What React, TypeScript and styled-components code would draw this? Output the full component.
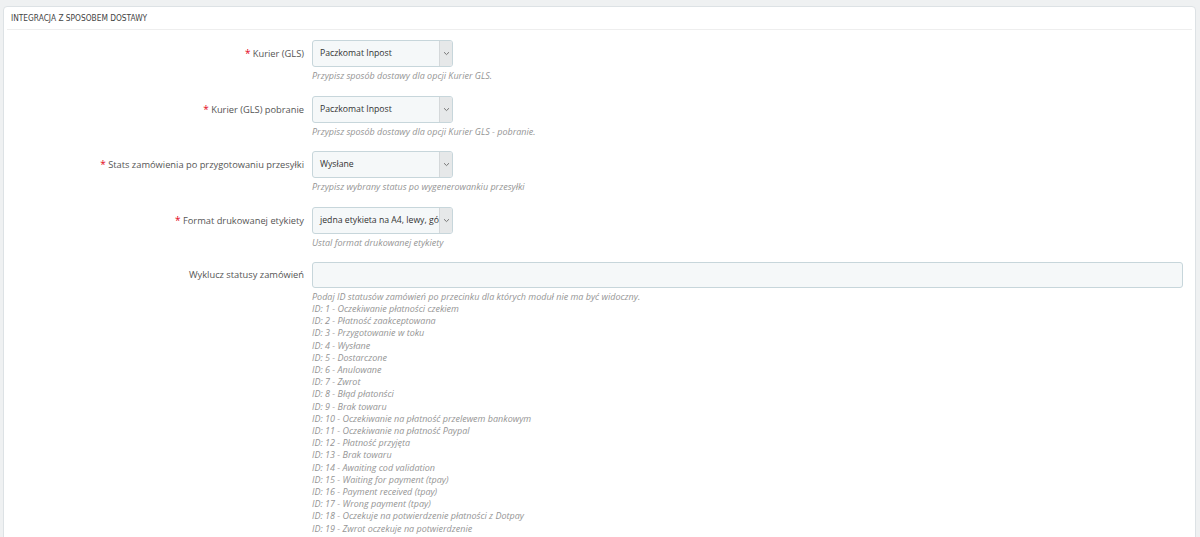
import React from "react";
import styled, { createGlobalStyle } from "styled-components";

const GlobalStyle = createGlobalStyle`
  html, body {
    margin: 0;
    padding: 0;
    background: #eff1f2;
    font-family: "Open Sans", "Liberation Sans", sans-serif;
    color: #555;
  }
`;

interface SelectField {
  label: string;
  value: string;
  help: string;
}

const selectFields: SelectField[] = [
  {
    label: "Kurier (GLS)",
    value: "Paczkomat Inpost",
    help: "Przypisz sposób dostawy dla opcji Kurier GLS.",
  },
  {
    label: "Kurier (GLS) pobranie",
    value: "Paczkomat Inpost",
    help: "Przypisz sposób dostawy dla opcji Kurier GLS - pobranie.",
  },
  {
    label: "Stats zamówienia po przygotowaniu przesyłki",
    value: "Wysłane",
    help: "Przypisz wybrany status po wygenerowankiu przesyłki",
  },
  {
    label: "Format drukowanej etykiety",
    value: "jedna etykieta na A4, lewy, górny róg",
    help: "Ustal format drukowanej etykiety",
  },
];

const statuses = [
  "Oczekiwanie płatności czekiem",
  "Płatność zaakceptowana",
  "Przygotowanie w toku",
  "Wysłane",
  "Dostarczone",
  "Anulowane",
  "Zwrot",
  "Błąd płatonści",
  "Brak towaru",
  "Oczekiwanie na płatność przelewem bankowym",
  "Oczekiwanie na płatność Paypal",
  "Płatność przyjęta",
  "Brak towaru",
  "Awaiting cod validation",
  "Waiting for payment (tpay)",
  "Payment received (tpay)",
  "Wrong payment (tpay)",
  "Oczekuje na potwierdzenie płatności z Dotpay",
  "Zwrot oczekuje na potwierdzenie",
];

const ChevronIcon = () => (
  <svg width="7" height="5" viewBox="0 0 7 5">
    <path d="M1 1.2 L3.5 3.6 L6 1.2" fill="none" stroke="#777" strokeWidth="1" />
  </svg>
);

const App: React.FC = () => {
  return (
    <>
      <GlobalStyle />
      <Page>
        <Panel>
          <PanelHeading>Integracja z sposobem dostawy</PanelHeading>
          <Form>
            {selectFields.map((field) => (
              <FormGroup key={field.label}>
                <Label>
                  <Required>*</Required> {field.label}
                </Label>
                <Control>
                  <SelectBox>
                    <SelectValue>{field.value}</SelectValue>
                    <SelectArrow>
                      <ChevronIcon />
                    </SelectArrow>
                  </SelectBox>
                  <HelpBlock>{field.help}</HelpBlock>
                </Control>
              </FormGroup>
            ))}
            <FormGroup>
              <Label>Wyklucz statusy zamówień</Label>
              <Control>
                <TextInput type="text" />
                <HelpBlock>
                  Podaj ID statusów zamówień po przecinku dla których moduł nie ma być widoczny.
                  {statuses.map((status, i) => (
                    <HelpLine key={i}>
                      ID: {i + 1} - {status}
                    </HelpLine>
                  ))}
                </HelpBlock>
              </Control>
            </FormGroup>
          </Form>
        </Panel>
      </Page>
    </>
  );
};

export default App;

const Page = styled.div`
  padding: 6px 4px 0 3px;
  height: 537px;
  box-sizing: border-box;
  overflow: hidden;
`;

const Panel = styled.div`
  background: #fff;
  border: 1px solid #dde2e5;
  border-radius: 4px;
  box-shadow: 0 2px 0 rgba(0, 0, 0, 0.06);
  padding: 0 0 20px;
  min-height: 600px;
`;

const PanelHeading = styled.div`
  margin: 0 3px;
  height: 22px;
  line-height: 22px;
  padding-left: 4px;
  border-bottom: 1px solid #eeeeee;
  font-family: "Liberation Sans Narrow", "DejaVu Sans Condensed", "Liberation Sans", sans-serif;
  font-size: 8.3px;
  text-transform: uppercase;
  color: #444;
`;

const Form = styled.div`
  padding: 10px 12px 0 0;
  display: flex;
  flex-direction: column;
  gap: 13.5px;
`;

const FormGroup = styled.div`
  display: grid;
  grid-template-columns: 300px 1fr;
  column-gap: 8px;
  align-items: start;
`;

const Label = styled.div`
  text-align: right;
  font-size: 9.3px;
  line-height: 26px;
  height: 26px;
  color: #555;
  white-space: nowrap;
`;

const Required = styled.span`
  color: #e3061a;
  font-size: 10px;
`;

const Control = styled.div`
  display: flex;
  flex-direction: column;
  align-items: flex-start;
`;

const SelectBox = styled.div`
  width: 141px;
  height: 27px;
  box-sizing: border-box;
  display: flex;
  align-items: stretch;
  background: #f5f8f9;
  border: 1px solid #c7d6db;
  border-radius: 3px;
  overflow: hidden;
`;

const SelectValue = styled.span`
  flex: 1;
  min-width: 0;
  padding-left: 7px;
  font-size: 8.7px;
  line-height: 25px;
  color: #333;
  white-space: nowrap;
  overflow: hidden;
`;

const SelectArrow = styled.span`
  width: 12px;
  flex: none;
  display: flex;
  align-items: center;
  justify-content: center;
  background: #e6e8e9;
  border-left: 1px solid #d4d8da;
`;

const TextInput = styled.input`
  width: 100%;
  height: 26px;
  box-sizing: border-box;
  margin: 0;
  background: #f5f8f9;
  border: 1px solid #c7d6db;
  border-radius: 3px;
  outline: none;
`;

const HelpBlock = styled.div`
  margin-top: 2px;
  font-size: 9px;
  font-style: italic;
  line-height: 13px;
  color: #959595;
`;

const HelpLine = styled.div`
  line-height: 12.2px;
`;
